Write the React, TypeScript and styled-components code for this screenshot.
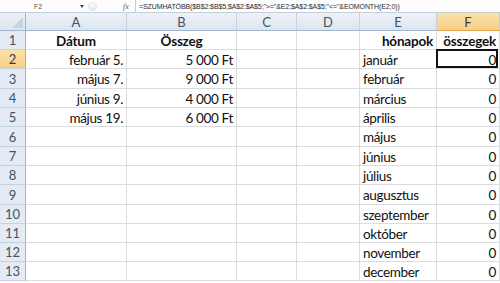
import React from "react";
import styled, { createGlobalStyle, css } from "styled-components";

const Global = createGlobalStyle`
  html, body { margin: 0; padding: 0; background: #ffffff; }
  body { width: 500px; height: 283px; overflow: hidden; font-family: Lato, "Open Sans", sans-serif; }
`;

const Page = styled.div`
  width: 500px;
  height: 283px;
  display: flex;
  flex-direction: column;
  background: #fff;
  overflow: hidden;
`;

const FormulaBar = styled.div`
  height: 13px;
  display: flex;
  align-items: center;
  background: #fdfdfe;
  border-bottom: 1px solid #c5cdd8;
  box-sizing: border-box;
  font-family: "Liberation Sans", Arial, sans-serif;
  font-size: 7px;
  color: #2b2b2b;
`;

const NameBox = styled.div`
  width: 80px;
  height: 100%;
  display: flex;
  align-items: center;
  justify-content: center;
  color: #555;
  box-sizing: border-box;
  padding-right: 4px;
`;

const NameArrow = styled.div`
  width: 0;
  height: 0;
  border-left: 2px solid transparent;
  border-right: 2px solid transparent;
  border-top: 3px solid #444;
  margin: 0 4px 0 0;
`;

const Splitter = styled.div`
  width: 9px;
  height: 9px;
  border-radius: 50%;
  background: radial-gradient(circle at 50% 40%, #ffffff 0%, #d7dde5 70%, #b8c1cc 100%);
  opacity: 0.8;
  margin-right: 26px;
`;

const Fx = styled.div`
  font-family: "Liberation Serif", serif;
  font-style: italic;
  font-size: 8px;
  color: #5a6472;
  width: 9px;
  margin-right: 3px;
`;

const FormulaText = styled.div`
  flex: 1;
  height: 100%;
  display: flex;
  align-items: center;
  padding-left: 3px;
  border-left: 1px solid #c5cdd8;
  white-space: nowrap;
  overflow: hidden;
  letter-spacing: -0.1px;
`;

const Sheet = styled.div`
  display: grid;
  grid-template-columns: 26px 101px 110px 60px 63px 77px 63px;
  grid-template-rows: 18px 19px 19px 20px 19px 19px 20px 19px 19px 20px 19px 19px 19px 19px;
`;

const Corner = styled.div`
  background: linear-gradient(#e9eef5, #dfe6ef);
  border-right: 1px solid #9eb6ce;
  border-bottom: 1px solid #9eb6ce;
  box-sizing: border-box;
  position: relative;
  &::after {
    content: "";
    position: absolute;
    right: 2px;
    bottom: 2px;
    width: 0;
    height: 0;
    border-left: 11px solid transparent;
    border-bottom: 11px solid #c7d3e1;
  }
`;

const ColHead = styled.div<{ $active?: boolean }>`
  box-sizing: border-box;
  display: flex;
  align-items: center;
  justify-content: center;
  font-size: 13px;
  color: #46525f;
  border-right: 1px solid #c5d1de;
  border-bottom: 1px solid #9eb6ce;
  background: linear-gradient(#edf2f8, #dde5ee);
  ${(p) =>
    p.$active &&
    css`
      background: linear-gradient(#fbe1a8, #f7cf86);
      border-bottom: 1px solid #e3a54b;
      color: #3a3a3a;
    `}
`;

const RowHead = styled.div<{ $active?: boolean }>`
  box-sizing: border-box;
  display: flex;
  align-items: center;
  justify-content: center;
  font-size: 13px;
  color: #46525f;
  border-right: 1px solid #9eb6ce;
  border-bottom: 1px solid #c5d1de;
  background: #e4ebf4;
  ${(p) =>
    p.$active &&
    css`
      background: linear-gradient(#fbe1a8, #f7cf86);
      border-right: 1px solid #e3a54b;
      color: #3a3a3a;
    `}
`;

const Cell = styled.div<{ $align?: "left" | "right" | "center"; $bold?: boolean; $selected?: boolean }>`
  box-sizing: border-box;
  display: flex;
  align-items: center;
  justify-content: ${(p) =>
    p.$align === "right" ? "flex-end" : p.$align === "center" ? "center" : "flex-start"};
  padding: 1px 3px 0;
  font-size: 13.5px;
  letter-spacing: ${(p) => (p.$bold ? "-0.2px" : "-0.35px")};
  font-weight: ${(p) => (p.$bold ? 700 : 400)};
  color: #111;
  white-space: nowrap;
  border-right: 1px solid #dadcdd;
  border-bottom: 1px solid #dadcdd;
  position: relative;
  ${(p) =>
    p.$selected &&
    css`
      &::after {
        content: "";
        position: absolute;
        left: -1px;
        top: -1px;
        right: 1px;
        bottom: 0;
        border: 2px solid #111;
      }
    `}
`;

type CellDef = { t?: string; a?: "left" | "right" | "center"; b?: boolean };

const months = [
  "január",
  "február",
  "március",
  "április",
  "május",
  "június",
  "július",
  "augusztus",
  "szeptember",
  "október",
  "november",
  "december",
];

const data: { [row: number]: { A?: CellDef; B?: CellDef } } = {
  1: { A: { t: "Dátum", a: "center", b: true }, B: { t: "Összeg", a: "center", b: true } },
  2: { A: { t: "február 5.", a: "right" }, B: { t: "5 000 Ft", a: "right" } },
  3: { A: { t: "május 7.", a: "right" }, B: { t: "9 000 Ft", a: "right" } },
  4: { A: { t: "június 9.", a: "right" }, B: { t: "4 000 Ft", a: "right" } },
  5: { A: { t: "május 19.", a: "right" }, B: { t: "6 000 Ft", a: "right" } },
};

const cols = ["A", "B", "C", "D", "E", "F"];

export default function App() {
  const rows = Array.from({ length: 13 }, (_, i) => i + 1);
  return (
    <Page>
      <Global />
      <FormulaBar>
        <NameBox>F2</NameBox>
        <NameArrow />
        <Splitter />
        <Fx>fx</Fx>
        <FormulaText>
          =SZUMHATÖBB($B$2:$B$5;$A$2:$A$5;"&gt;="&amp;E2;$A$2:$A$5;"&lt;="&amp;EOMONTH(E2;0))
        </FormulaText>
      </FormulaBar>
      <Sheet>
        <Corner />
        {cols.map((c) => (
          <ColHead key={c} $active={c === "F"}>
            {c}
          </ColHead>
        ))}
        {rows.map((r) => {
          const d = data[r] || {};
          const e: CellDef =
            r === 1 ? { t: "hónapok", a: "right", b: true } : { t: months[r - 2], a: "left" };
          const f: CellDef =
            r === 1 ? { t: "összegek", a: "right", b: true } : { t: "0", a: "right" };
          return (
            <React.Fragment key={r}>
              <RowHead $active={r === 2}>{r}</RowHead>
              <Cell $align={d.A?.a} $bold={d.A?.b}>{d.A?.t}</Cell>
              <Cell $align={d.B?.a} $bold={d.B?.b}>{d.B?.t}</Cell>
              <Cell />
              <Cell />
              <Cell $align={e.a} $bold={e.b}>{e.t}</Cell>
              <Cell $align={f.a} $bold={f.b} $selected={r === 2}>{f.t}</Cell>
            </React.Fragment>
          );
        })}
      </Sheet>
    </Page>
  );
}
